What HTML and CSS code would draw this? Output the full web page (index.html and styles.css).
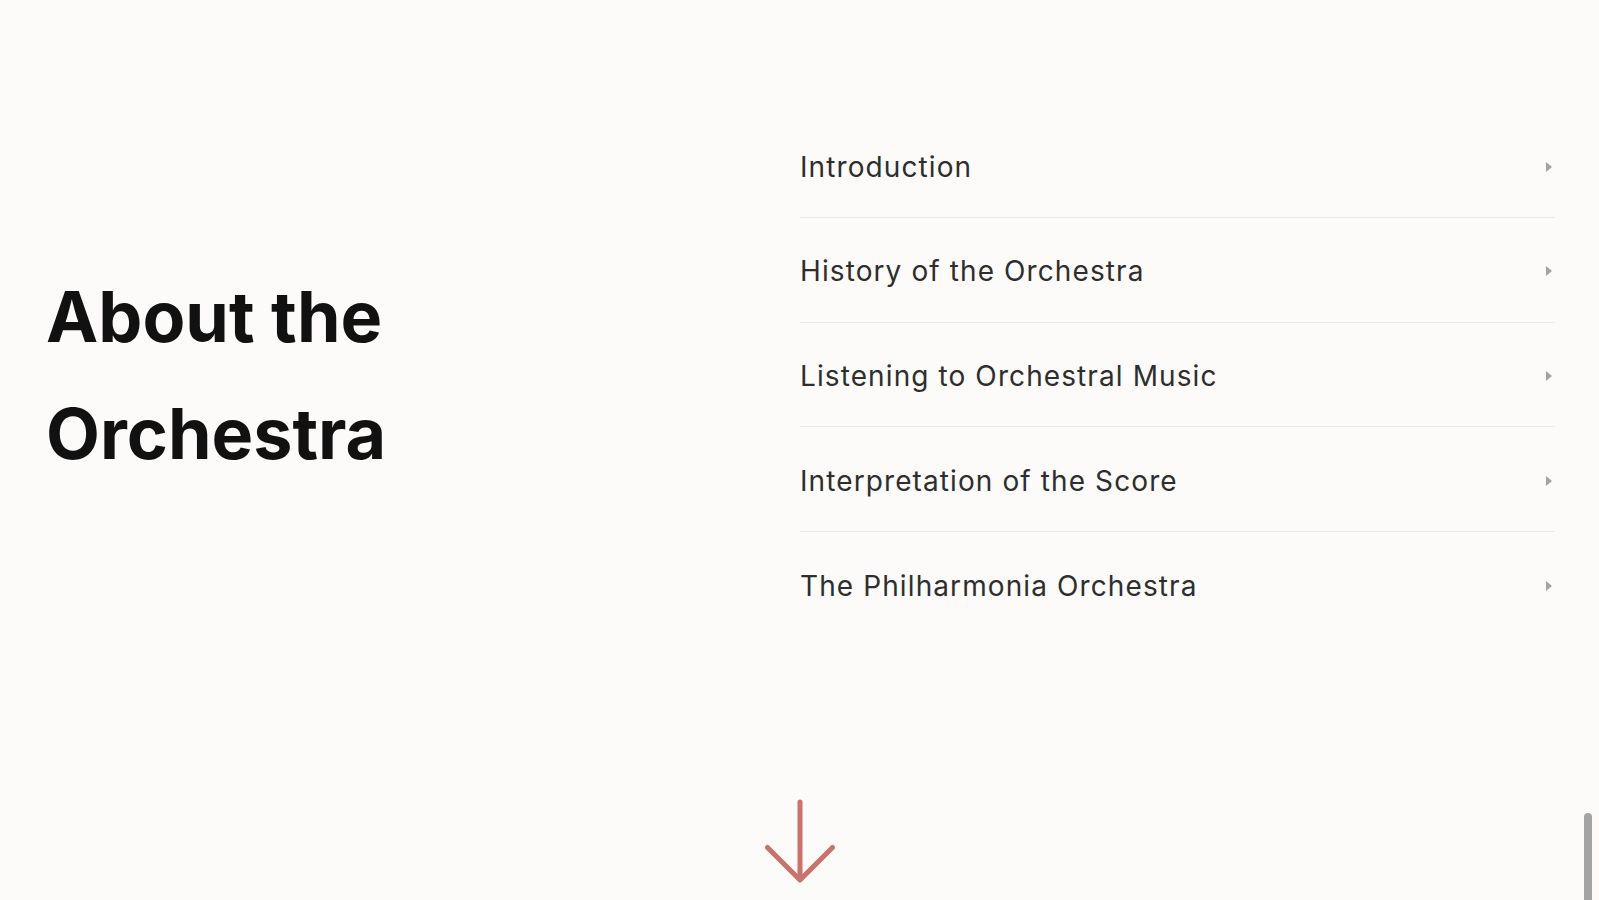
FILE: index.html
```html
<!DOCTYPE html>
<html lang="en">
<head>
<meta charset="utf-8">
<title>About the Orchestra</title>
<link rel="stylesheet" href="styles.css">
</head>
<body>
<main class="page">
  <section class="about">
    <h1 class="about-title">About the<br>Orchestra</h1>
    <nav class="topics">
      <a class="topic" href="#"><span>Introduction</span><svg class="caret" viewBox="0 0 8 12" width="8" height="12"><path d="M1 1 L7 6 L1 11 Z"/></svg></a>
      <a class="topic" href="#"><span>History of the Orchestra</span><svg class="caret" viewBox="0 0 8 12" width="8" height="12"><path d="M1 1 L7 6 L1 11 Z"/></svg></a>
      <a class="topic" href="#"><span>Listening to Orchestral Music</span><svg class="caret" viewBox="0 0 8 12" width="8" height="12"><path d="M1 1 L7 6 L1 11 Z"/></svg></a>
      <a class="topic" href="#"><span>Interpretation of the Score</span><svg class="caret" viewBox="0 0 8 12" width="8" height="12"><path d="M1 1 L7 6 L1 11 Z"/></svg></a>
      <a class="topic" href="#"><span>The Philharmonia Orchestra</span><svg class="caret" viewBox="0 0 8 12" width="8" height="12"><path d="M1 1 L7 6 L1 11 Z"/></svg></a>
    </nav>
  </section>
  <div class="scroll-cue">
    <svg class="arrow" viewBox="0 0 76 84" width="76" height="84"><path d="M38 3 V80 M5.5 48.5 L38 81 L70.5 48.5"/></svg>
  </div>
</main>
<div class="thumb"></div>
</body>
</html>
```

FILE: styles.css
```css
html, body {
  margin: 0;
  padding: 0;
  background: #fcfbf9;
  overflow: hidden;
}
body {
  font-family: Inter, "Noto Sans", "Liberation Sans", sans-serif;
  color: #333;
  height: 900px;
}
.page {
  display: flex;
  flex-direction: column;
}
.about {
  height: 750px;
  display: grid;
  grid-template-columns: 754px 1fr;
  align-items: center;
  padding: 0 44px 0 46px;
}
.about-title {
  margin: 0;
  font-size: 70px;
  line-height: 117px;
  font-weight: 700;
  color: #111;
  letter-spacing: 0;
}
.topics {
  display: flex;
  flex-direction: column;
}
.topic {
  box-sizing: border-box;
  display: flex;
  align-items: center;
  justify-content: space-between;
  height: 104.6px;
  padding-top: 3px;
  border-bottom: 1px solid #eceae7;
  color: #2e2e2e;
  text-decoration: none;
  font-size: 28px;
  letter-spacing: 1.1px;
}
.topic:last-child {
  border-bottom: none;
}
.caret {
  fill: #a3a3a3;
  margin-right: 2px;
}
.scroll-cue {
  display: flex;
  justify-content: center;
  padding-top: 49px;
}
.arrow {
  fill: none;
  stroke: #c9736c;
  stroke-width: 5;
  stroke-linecap: round;
  stroke-linejoin: round;
}
.thumb {
  position: fixed;
  right: 7px;
  bottom: 0;
  width: 8px;
  height: 87px;
  border-radius: 4px 4px 0 0;
  background: #a4a4a4;
}
```
